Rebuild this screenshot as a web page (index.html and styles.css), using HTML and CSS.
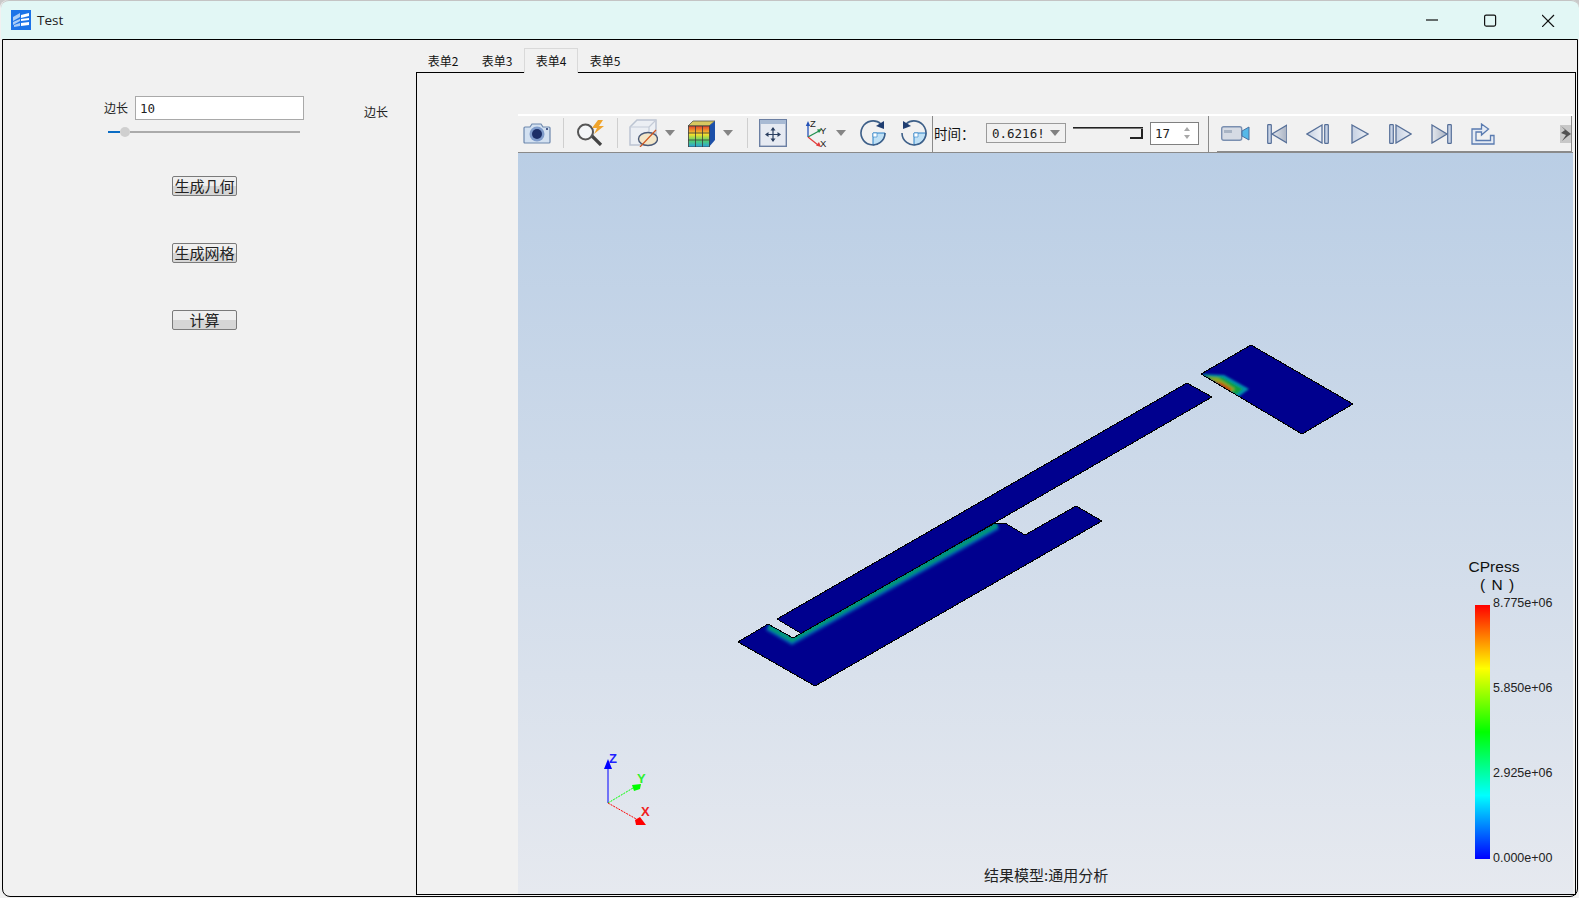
FILE: index.html
```html
<!DOCTYPE html>
<html lang="zh">
<head>
<meta charset="utf-8">
<title>Test</title>
<link rel="stylesheet" href="styles.css">
</head>
<body>
<div class="window">
  <header class="titlebar">
    <svg class="app-icon" viewBox="0 0 20 20"><rect width="20" height="20" fill="#1b73e8"/><path d="M2 7 9 3v4L2 11zM2 12l7-3v2l-7 4zM3 15l6-2v3l-6 1z" fill="#a9cdf7"/><path d="M10 5 18 3v3l-8 2zM10 9l8-1v2l-8 1zM10 13l8-1v3l-8 1z" fill="#fff"/></svg>
    <span class="app-title">Test</span>
    <div class="win-controls">
      <svg class="win-btn" viewBox="0 0 13 26"><path d="M0 19H12" stroke="#111" stroke-width="1.2" fill="none"/></svg>
      <svg class="win-btn" viewBox="0 0 13 26"><rect x="0.6" y="14.1" width="11" height="11" rx="1.5" stroke="#111" stroke-width="1.2" fill="none"/></svg>
      <svg class="win-btn" viewBox="0 0 13 26"><path d="M0 14 12 26M12 14 0 26" stroke="#111" stroke-width="1.2" fill="none"/></svg>
    </div>
  </header>
  <div class="client">
    <aside class="panel">
      <div class="length-row">
        <label class="cjk-label">边长</label>
        <input class="length-input" value="10">
        <span class="cjk-label side-label">边长</span>
      </div>
      <div class="slider"><i class="slider-fill"></i><i class="slider-knob"></i><i class="slider-rest"></i></div>
      <div class="actions">
        <button class="action">生成几何</button>
        <button class="action">生成网格</button>
        <button class="action">计算</button>
      </div>
    </aside>
    <main class="tabs-area">
      <nav class="tabstrip">
        <span class="tab">表单2</span>
        <span class="tab">表单3</span>
        <span class="tab tab-active">表单4</span>
        <span class="tab">表单5</span>
      </nav>
      <section class="tabpane">
        <div class="viewport">
          <div class="toolbar">
            <svg class="ti cam" viewBox="0 0 28 22"><path d="M2 5h5l2-3h9l2 3h6q1 0 1 1v14q0 1-1 1H2q-1 0-1-1V6q0-1 1-1z" fill="#d3e1f1" stroke="#6d88ad" stroke-width="1.2"/><circle cx="14" cy="12" r="7.5" fill="#7f9ccb"/><circle cx="14" cy="12" r="5" fill="#1c2f68"/><circle cx="24" cy="7" r="1" fill="#1c2f68"/></svg>
            <i class="sep s-a"></i>
            <svg class="ti mag" viewBox="0 0 29 26"><path d="M15 15 25 25" stroke="#444" stroke-width="3.2"/><circle cx="9.500" cy="12" r="7.500" fill="#f4f6f8" stroke="#565656" stroke-width="2"/><path d="M22 0 16 8h5l-3 6 10-8h-5l4-6z" fill="#f0a42c"/></svg>
            <i class="sep s-b"></i>
            <svg class="ti cube" viewBox="0 0 29 28"><path d="M1 8 8 1h19v17l-7 8H1z" fill="#eceff4" stroke="#bcc4d2" stroke-width="1.5"/><path d="M1 8h19v18M20 8l7-7" fill="none" stroke="#c4cbd7" stroke-width="1.2"/><ellipse cx="19" cy="20" rx="9.500" ry="6.500" fill="#f3e6c8" stroke="#4a5a78" stroke-width="1.4"/><path d="M11 28 27 11" stroke="#d0551d" stroke-width="1.2"/></svg>
            <svg class="ti arrow a-a" viewBox="0 0 10 6"><path d="M0 0h10L5 6z" fill="#858585"/></svg>
            <svg class="ti ccube" viewBox="0 0 27 27"><defs><linearGradient id="cc" x1="0" y1="0" x2="0" y2="1"><stop offset="0" stop-color="#e8402c"/><stop offset=".4" stop-color="#f4e02c"/><stop offset=".7" stop-color="#50d070"/><stop offset="1" stop-color="#2aa0e0"/></linearGradient></defs><path d="M5 1h22l-6 5H0z" fill="#d8c860" stroke="#444" stroke-width=".7"/><path d="M21 6l6-5v19l-6 7z" fill="#1d50a8"/><rect x="0.500" y="6" width="21" height="21" fill="url(#cc)" stroke="#3a3a3a" stroke-width=".8"/><path d="M7.500 6v21M14.500 6v21M0 13h21M0 20h21" stroke="#3a3a3a" stroke-width=".8"/></svg>
            <svg class="ti arrow a-b" viewBox="0 0 10 6"><path d="M0 0h10L5 6z" fill="#858585"/></svg>
            <i class="sep s-c"></i>
            <svg class="ti pan" viewBox="0 0 28 28"><rect x=".7" y=".7" width="26.600" height="26.600" fill="#e6eaf2" stroke="#6b7fa3" stroke-width="1.400"/><rect x="1" y="1" width="26" height="4" fill="#a8bad4"/><path d="M14 9v13M8 15.500h12" stroke="#2b3f60" stroke-width="1.200"/><path d="M14 8l-2.500 3.500h5zM14 23l-2.500-3.500h5zM6 15.500 9.500 13v5zM22 15.500 18.500 13v5z" fill="#2b3f60"/></svg>
            <svg class="ti triad" viewBox="0 0 22 29"><path d="M3 18V5" stroke="#2452b8" stroke-width="1.300"/><path d="M3 2 .8 7h4.400z" fill="#2452b8"/><path d="M3 18 14 12" stroke="#1f8f4d" stroke-width="1.300"/><path d="M17 10l-5 .5 2 3.500z" fill="#1f8f4d"/><path d="M3 18 13 26" stroke="#e23b3b" stroke-width="1.300"/><path d="M16 28l-2-5-3 3.500z" fill="#e23b3b"/><text class="triad-letter" x="5" y="8">Z</text><text class="triad-letter" x="15" y="15">Y</text><text class="triad-letter" x="15" y="28">X</text></svg>
            <svg class="ti arrow a-c" viewBox="0 0 10 6"><path d="M0 0h10L5 6z" fill="#858585"/></svg>
            <svg class="ti rot r-a" viewBox="0 0 26 26"><path d="M13 13H25A12 12 0 0 1 13 25z" fill="#bfe0f5" stroke="#2a80c8"/><path d="M13 13h4v4h-4z" fill="#fff" stroke="#2a80c8" stroke-width=".6"/><path d="M21 4A12 12 0 1 0 25 13" fill="none" stroke="#3d5f88" stroke-width="1.600"/><path d="M24 1v8l-8-3z" fill="#1f3d70"/></svg>
            <svg class="ti rot r-b" viewBox="0 0 26 26"><path d="M13 13H25A12 12 0 0 1 13 25z" fill="#bfe0f5" stroke="#2a80c8"/><path d="M13 13h4v4h-4z" fill="#fff" stroke="#2a80c8" stroke-width=".6"/><path d="M5 4A12 12 0 1 1 1 13" fill="none" stroke="#3d5f88" stroke-width="1.600"/><path d="M2 1v8l8-3z" fill="#1f3d70"/></svg>
            <i class="sep-dark s-d"></i>
            <span class="time-label">时间：</span>
            <div class="combo"><span class="combo-text">0.6216!</span><svg class="combo-arrow" viewBox="0 0 10 6"><path d="M0 0h10L5 6z" fill="#808080"/></svg></div>
            <div class="ruler"><i class="ruler-line"></i><i class="ruler-handle"></i></div>
            <div class="spin"><span class="spin-text">17</span><svg class="spin-arrows" viewBox="0 0 8 14"><path d="M4 1 7 5H1zM4 13 7 9H1z" fill="#a8a8a8"/></svg></div>
            <i class="sep-dark s-e"></i>
            <div class="toolbar-two">
              <svg class="ti video" viewBox="0 0 29 15"><rect x=".7" y=".7" width="20" height="13.600" rx="2" fill="#d6dbe4" stroke="#7a8fb0" stroke-width="1.400"/><rect x="3" y="4" width="8" height="3" fill="#a9b4c4"/><path d="M21 5 28 1v13l-7-4z" fill="#55b8e8" stroke="#4a6f9f"/></svg>
              <svg class="ti first" viewBox="0 0 20 20"><use href="#p-bar" x="0"/><path d="M20 1 5 10l15 9z" fill="url(#pl)" stroke="#566f98" stroke-width="1.300"/></svg>
              <svg class="ti prev" viewBox="0 0 23 20"><path d="M16 1 1 10l15 9z" fill="url(#pr)" stroke="#566f98" stroke-width="1.300"/><use href="#p-bar" x="18"/></svg>
              <svg class="ti play" viewBox="0 0 18 20"><path d="M1 1l16 9-16 9z" fill="url(#pr)" stroke="#566f98" stroke-width="1.300"/></svg>
              <svg class="ti next" viewBox="0 0 23 20"><use href="#p-bar" x="0"/><path d="M7 1l15 9-15 9z" fill="url(#pr)" stroke="#566f98" stroke-width="1.300"/></svg>
              <svg class="ti last" viewBox="0 0 21 20"><path d="M1 1l15 9-15 9z" fill="url(#pl)" stroke="#566f98" stroke-width="1.300"/><use href="#p-bar" x="16"/></svg>
              <svg class="ti export" viewBox="0 0 24 22"><path d="M1 6H10.500V1L17.500 6 10.500 12V9H5V17.500H19.500V12.500H23V21H1Z" fill="#e5ebf4" stroke="#5a7bb0" stroke-width="1.300"/></svg>
              <svg class="ti more" viewBox="0 0 11 18"><path d="M0 0h11v18H0z" fill="#c8c8c8"/><path d="M1 1l4 4-4 3 5 2-4 6 6-5 3-2-5-4z" fill="#333" opacity=".8"/></svg>
            </div>
          </div>
          <svg class="scene" viewBox="518 153 1055 741">
            <defs>
              <linearGradient id="bg" x1="0" y1="0" x2="0" y2="1"><stop offset="0" stop-color="#bacee5"/><stop offset="1" stop-color="#e6e9ef"/></linearGradient>
              <linearGradient id="rainbow" x1="0" y1="0" x2="0" y2="1"><stop offset="0" stop-color="#f00"/><stop offset=".25" stop-color="#ff0"/><stop offset=".5" stop-color="#0f0"/><stop offset=".75" stop-color="#0ff"/><stop offset="1" stop-color="#00f"/></linearGradient>
              <linearGradient id="pr" x1="0" y1="0" x2="1" y2="0"><stop offset="0" stop-color="#c5d0e2"/><stop offset="1" stop-color="#eef1f6"/></linearGradient>
              <linearGradient id="pl" x1="0" y1="0" x2="1" y2="0"><stop offset="0" stop-color="#e4e8ee"/><stop offset="1" stop-color="#a9b2c2"/></linearGradient>
              <g id="p-bar"><rect x=".7" y=".7" width="3.600" height="18.600" rx=".6" fill="#c8d3e6" stroke="#566f98" stroke-width="1.200"/></g>
              <filter id="soft" x="-20%" y="-20%" width="140%" height="140%"><feGaussianBlur stdDeviation="1.800"/></filter>
              <filter id="softer" x="-20%" y="-20%" width="140%" height="140%"><feGaussianBlur stdDeviation="1"/></filter>
              <clipPath id="clip-low"><path d="M738 642 768 624 793 638 995 523 1005 523 1025 535 1076 506 1102 521 815 686z"/></clipPath>
              <clipPath id="clip-block"><path d="M1201 374 1251 345 1353 404 1302 434z"/></clipPath>
            </defs>
            <rect x="518" y="153" width="1055" height="741" fill="url(#bg)"/>
            <path class="mesh" d="M777 619 802 634 1212 397 1187 383z"/>
            <path class="mesh" d="M738 642 768 624 793 638 995 523 1005 523 1025 535 1076 506 1102 521 815 686z"/>
            <g clip-path="url(#clip-low)">
              <path d="M768 626 792 640 997 525" fill="none" stroke="#0060b0" stroke-width="9" filter="url(#soft)"/>
              <path d="M769 627 792 640 997 525" fill="none" stroke="#009a78" stroke-width="4" filter="url(#softer)"/>
            </g>
            <path class="mesh-line" d="M738 642 768 624 793 638 995 523 1005 523 1025 535 1076 506 1102 521 815 686z"/>
            <path class="mesh" d="M1201 374 1251 345 1353 404 1302 434z"/>
            <g clip-path="url(#clip-block)">
              <g filter="url(#softer)">
                <path d="M1201 374 1224 375 1249 389 1238 397z" fill="#0090b0"/>
                <path d="M1203 375 1222 377 1243 389 1236 395z" fill="#0fa040"/>
                <path d="M1207 377 1218 378 1235 389 1231 392z" fill="#8fa820"/>
                <path d="M1214 381 1222 383 1232 389 1229 392z" fill="#c24a10"/>
              </g>
            </g>
            <path class="mesh-line" d="M1201 374 1251 345 1353 404 1302 434z"/>
            <path d="M608 803V768" class="axis-z"/>
            <path d="M608 803 633 788" class="axis-y"/>
            <path d="M608 803 638 820" class="axis-x"/>
            <path d="M608 759 604 769H612z" fill="#00f"/>
            <path d="M641 784 632 785 634 791 640 789z" fill="#0f0"/>
            <path d="M646 825 640 817 635 820 636 825z" fill="#f00"/>
            <text class="axis-letter l-z" x="609" y="763">Z</text>
            <text class="axis-letter l-y" x="637" y="783">Y</text>
            <text class="axis-letter l-x" x="641" y="816">X</text>
            <text class="legend-title" x="1494" y="572">CPress</text>
            <text class="legend-title legend-unit" x="1497" y="590">( N )</text>
            <rect x="1475" y="605" width="15" height="254" fill="url(#rainbow)"/>
            <text class="legend-value" x="1493" y="607">8.775e+06</text>
            <text class="legend-value" x="1493" y="692">5.850e+06</text>
            <text class="legend-value" x="1493" y="777">2.925e+06</text>
            <text class="legend-value" x="1493" y="862">0.000e+00</text>
            <text class="scene-caption" x="984" y="881">结果模型:通用分析</text>
          </svg>
        </div>
      </section>
    </main>
  </div>
</div>
</body>
</html>
```

FILE: styles.css
```css
* { box-sizing: border-box; }
html, body { margin: 0; padding: 0; height: 100%; overflow: hidden; }
body { background: #c9c9c9; font-family: "Noto Sans CJK SC", "Liberation Sans", sans-serif; color: #111; }
i { display: block; }

.window { height: 898px; display: flex; flex-direction: column; background: #f1f1f1; border-radius: 8px 8px 0 0; }

.titlebar { height: 39px; flex: none; margin-left: 1px; background: #e2f7f5; border-top: 1px solid #c4c4c4; border-radius: 8px 8px 0 0; display: flex; align-items: center; padding-left: 10px; }
.app-icon { width: 20px; height: 20px; flex: none; }
.app-title { margin-left: 6px; font: 13.500px "Open Sans", sans-serif; color: #222; }
.win-controls { margin-left: auto; display: flex; gap: 45px; align-self: flex-start; padding-right: 24px; }
.win-btn { width: 13px; height: 26px; display: block; }

.client { flex: 1; min-height: 0; margin: 0 1px 1px 2px; border: 1px solid #000; border-radius: 0 0 8px 8px; display: flex; background: #f1f1f1; }

.panel { width: 413px; flex: none; padding-top: 56px; }
.length-row { display: flex; height: 24px; margin-left: 101px; }
.cjk-label { font-size: 12px; line-height: 24px; width: 24px; flex: none; color: #222; }
.length-input { width: 169px; height: 24px; margin-left: 7px; padding: 0 4px; border: 1px solid #a9a9a9; background: #fff; font: 12.500px "DejaVu Sans Mono", monospace; color: #222; outline: none; border-radius: 0; }
.side-label { margin: 4px 0 0 60px; }

.slider { display: flex; align-items: center; width: 192px; height: 10px; margin: 7px 0 0 105px; }
.slider-fill { width: 12px; height: 2px; background: #0a6cc4; }
.slider-knob { width: 10px; height: 10px; border-radius: 50%; background: #cfcfcf; }
.slider-rest { flex: 1; height: 2px; background: #ababab; }

.actions { display: flex; flex-direction: column; gap: 47px; margin: 39px 0 0 169px; }
.action { width: 65px; height: 20px; padding: 0; border: 1px solid #7a7a7a; border-radius: 2px; background: linear-gradient(#efefef 0 50%, #d6d6d6 50% 100%); font: 15px/18px "Noto Sans CJK SC", sans-serif; color: #222; white-space: nowrap; }

.tabs-area { flex: 1; min-width: 0; display: flex; flex-direction: column; padding: 0 1px 1px 0; }
.tabstrip { height: 32px; flex: none; display: flex; align-items: flex-end; }
.tab { width: 54px; height: 24px; font-size: 12px; line-height: 24px; text-align: center; color: #111; border: 1px solid transparent; border-bottom: 0; position: relative; z-index: 1; }
.tab-active { height: 25px; margin-bottom: -1px; border-color: #d9d9d9; background: #f1f1f1; }
.tabpane { flex: 1; min-height: 0; border: 1px solid #000; padding: 41px 2px 0 101px; }

.viewport { height: 100%; display: flex; flex-direction: column; }
.toolbar { height: 39px; flex: none; display: flex; align-items: center; padding-bottom: 2px; border-top: 2px solid #fff; border-bottom: 1px solid #8a8a8a; background: #f1f1f1; }
.ti { display: block; flex: none; }
.sep { width: 1px; height: 30px; flex: none; background: #cfcfcf; }
.sep-dark { width: 1px; align-self: stretch; margin-bottom: -2px; flex: none; background: #8a8a8a; }

.cam { width: 28px; height: 22px; margin-left: 5px; }
.s-a { margin-left: 12px; }
.mag { width: 29px; height: 26px; margin-left: 12px; }
.s-b { margin-left: 12px; }
.cube { width: 29px; height: 28px; margin-left: 11px; }
.arrow { width: 10px; height: 6px; }
.a-a { margin-left: 7px; }
.ccube { width: 27px; height: 27px; margin-left: 13px; }
.a-b { margin-left: 8px; }
.s-c { margin-left: 14px; }
.pan { width: 28px; height: 28px; margin-left: 11px; }
.triad { width: 22px; height: 29px; margin-left: 18px; }
.triad-letter { font: 9.500px "Liberation Sans", sans-serif; fill: #222; }
.a-c { margin-left: 9px; }
.rot { width: 26px; height: 26px; }
.r-a { margin-left: 14px; }
.r-b { margin-left: 15px; }
.s-d { margin-left: 5px; }
.time-label { width: 36px; flex: none; margin-left: 1px; font: 13.500px "Noto Sans CJK TC", sans-serif; white-space: nowrap; color: #111; }

.combo { width: 80px; height: 20px; margin-left: 16px; flex: none; border: 1px solid #9a9a9a; display: flex; align-items: center; padding-left: 5px; }
.combo-text { width: 54px; white-space: nowrap; font: 12.500px "DejaVu Sans Mono", monospace; color: #222; }
.combo-arrow { width: 10px; height: 6px; margin-left: 4px; flex: none; }

.ruler { width: 70px; height: 13px; margin-left: 7px; flex: none; display: flex; flex-direction: column; align-items: flex-end; }
.ruler-line { width: 100%; height: 2px; background: linear-gradient(#222 0 60%, #777 60%); }
.ruler-handle { width: 13px; height: 10px; border-right: 2px solid #222; border-bottom: 2px solid #222; background: #eee; }

.spin { width: 49px; height: 23px; margin-left: 7px; flex: none; border: 1px solid #808080; background: #fff; display: flex; align-items: center; justify-content: space-between; padding: 0 7px 0 4px; }
.spin-text { font: 12.500px "DejaVu Sans Mono", monospace; color: #222; }
.spin-arrows { width: 8px; height: 14px; display: block; }
.s-e { margin-left: 9px; }

.toolbar-two { width: 355px; margin-left: 8px; margin-bottom: -2px; align-self: stretch; flex: none; display: flex; align-items: center; background: #f1f1f1; border-right: 1px solid #8a8a8a; border-bottom: 1px solid #8a8a8a; }
.video { width: 29px; height: 15px; margin-left: 4px; }
.first { width: 20px; height: 20px; margin-left: 17px; }
.prev { width: 23px; height: 20px; margin-left: 19px; }
.play { width: 18px; height: 20px; margin-left: 22px; }
.next { width: 23px; height: 20px; margin-left: 20px; }
.last { width: 21px; height: 20px; margin-left: 19px; }
.export { width: 24px; height: 22px; margin-left: 19px; }
.more { width: 11px; height: 18px; margin-left: auto; }

.scene { flex: 1; min-height: 0; width: 100%; display: block; }
.mesh { fill: #00008e; stroke: #000; stroke-width: 1; shape-rendering: crispEdges; }
.mesh-line { fill: none; stroke: #000; stroke-width: 1; shape-rendering: crispEdges; }
.axis-z { stroke: #00f; fill: none; }
.axis-y { stroke: #0f0; fill: none; stroke-dasharray: 2 1; }
.axis-x { stroke: #f00; fill: none; stroke-dasharray: 2 1; }
.axis-letter { font: bold 13px "Liberation Sans", sans-serif; }
.l-z { fill: #2020ff; }
.l-y { fill: #30f030; }
.l-x { fill: #f02020; }
.legend-title { font: 15.500px "Liberation Sans", sans-serif; fill: #111; text-anchor: middle; }
.legend-unit { word-spacing: 2px; }
.legend-value { font: 12.500px "Liberation Sans", sans-serif; fill: #222; }
.scene-caption { font: 15px "Noto Sans CJK SC", sans-serif; fill: #222; }
```
